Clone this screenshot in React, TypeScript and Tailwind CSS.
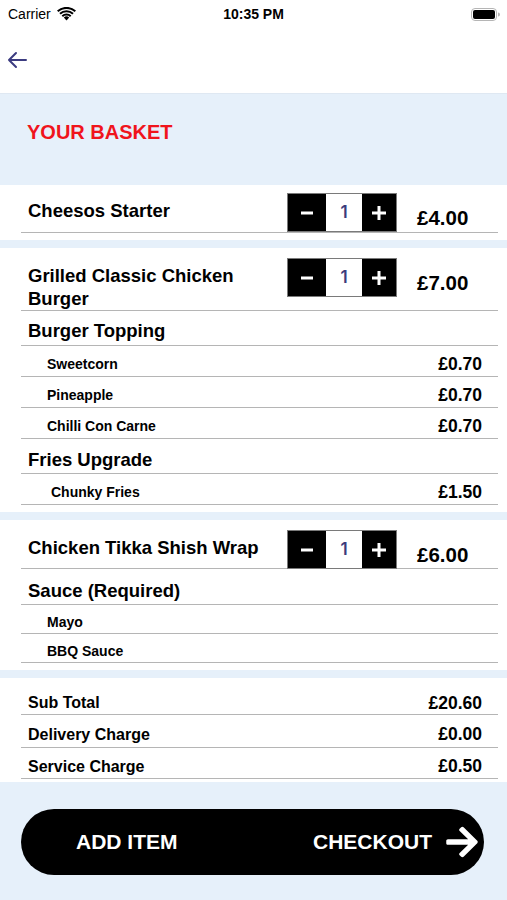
import { FaArrowRight } from "react-icons/fa";

const font = { fontFamily: '"Liberation Sans", Arial, sans-serif' };

type Sub = { name: string; price?: string; pt: string; h: string; indent?: string };
type Group = { title: string; pt: string; h: string; subs: Sub[] };
type Item = { name: string[]; price: string; rowH: string; groups: Group[] };

const items: Item[] = [
  { name: ["Cheesos Starter"], price: "£4.00", rowH: "h-[40px]", groups: [] },
  {
    name: ["Grilled Classic Chicken", "Burger"],
    price: "£7.00",
    rowH: "h-[53px]",
    groups: [
      {
        title: "Burger Topping",
        pt: "pt-[5px]",
        h: "h-[35px]",
        subs: [
          { name: "Sweetcorn", price: "£0.70", pt: "pt-[6px]", h: "h-[31px]" },
          { name: "Pineapple", price: "£0.70", pt: "pt-[7px]", h: "h-[31px]" },
          { name: "Chilli Con Carne", price: "£0.70", pt: "pt-[7px]", h: "h-[31px]" },
        ],
      },
      {
        title: "Fries Upgrade",
        pt: "pt-[7px]",
        h: "h-[35px]",
        subs: [{ name: "Chunky Fries", price: "£1.50", pt: "pt-[7px]", h: "h-[31px]", indent: "pl-[30px]" }],
      },
    ],
  },
  {
    name: ["Chicken Tikka Shish Wrap"],
    price: "£6.00",
    rowH: "h-[39px]",
    groups: [
      {
        title: "Sauce (Required)",
        pt: "pt-[8px]",
        h: "h-[36px]",
        subs: [
          { name: "Mayo", pt: "pt-[6px]", h: "h-[29px]" },
          { name: "BBQ Sauce", pt: "pt-[7px]", h: "h-[29px]" },
        ],
      },
    ],
  },
];

const totals = [
  { label: "Sub Total", value: "£20.60", h: "h-[37px]", pt: "pt-[14px]" },
  { label: "Delivery Charge", value: "£0.00", h: "h-[33px]", pt: "pt-[7px]" },
  { label: "Service Charge", value: "£0.50", h: "h-[31px]", pt: "pt-[7px]" },
];

function Stepper() {
  return (
    <div className="flex h-[39px] w-[110px] shrink-0 border border-[#7a7a7a]">
      <div className="flex w-[38px] items-center justify-center bg-black">
        <svg width="16" height="16" viewBox="0 0 16 16">
          <rect x="2" y="6.5" width="12" height="3" fill="#fff" />
        </svg>
      </div>
      <div className="flex w-[36px] items-center justify-center bg-white text-[17px] font-semibold text-[#3b3b7d]" style={{ fontFamily: "Inter, sans-serif" }}>
        1
      </div>
      <div className="flex flex-1 items-center justify-center bg-black">
        <svg width="18" height="18" viewBox="0 0 18 18">
          <rect x="2" y="7.5" width="14" height="3" fill="#fff" />
          <rect x="7.5" y="2" width="3" height="14" fill="#fff" />
        </svg>
      </div>
    </div>
  );
}

function StatusBar() {
  return (
    <div className="relative flex h-[28px] items-center px-[8px] text-[14px] text-black">
      <span>Carrier</span>
      <svg className="ml-[6px]" width="19" height="14" viewBox="0 0 19 14">
        <path d="M9.5 13.5 L12.2 10.6 A4 4 0 0 0 6.8 10.6 Z" fill="#000" />
        <path d="M4.6 8.4 A7 7 0 0 1 14.4 8.4 L13 9.9 A5 5 0 0 0 6 9.9 Z" fill="#000" />
        <path d="M2.3 6 A10.5 10.5 0 0 1 16.7 6 L15.3 7.5 A8.5 8.5 0 0 0 3.7 7.5 Z" fill="#000" />
        <path d="M0 3.6 A14 14 0 0 1 19 3.6 L17.6 5.1 A12 12 0 0 0 1.4 5.1 Z" fill="#000" />
      </svg>
      <span className="absolute left-1/2 -translate-x-1/2 font-bold">10:35 PM</span>
      <svg className="ml-auto mr-[-1px]" width="29" height="13" viewBox="0 0 29 13">
        <rect x="0.5" y="0.5" width="25" height="12" rx="3.5" fill="none" stroke="#b5b5b5" />
        <rect x="2" y="2" width="22" height="9" rx="2" fill="#000" />
        <path d="M27 4.5 A2 2 0 0 1 27 8.5 Z" fill="#b5b5b5" />
      </svg>
    </div>
  );
}

export default function App() {
  return (
    <div className="flex h-[900px] w-full flex-col overflow-hidden bg-[#e6f0fa]" style={font}>
      <div className="h-[93px] bg-white">
        <StatusBar />
        <div className="pl-[7px] pt-[23px]">
          <svg width="20" height="18" viewBox="0 0 20 18">
            <path d="M19 9 H2 M9 2 L2 9 L9 16" fill="none" stroke="#3b3b80" strokeWidth="2" strokeLinecap="round" strokeLinejoin="round" />
          </svg>
        </div>
      </div>

      <div className="h-[92px] border-t border-[#dfe8f2] pl-[27px] pt-[23px]">
        <h1 className="text-[20px] font-bold text-[#f0141c]">YOUR BASKET</h1>
      </div>

      {items.map((item, i) => (
        <div key={i} className={`bg-white pl-[21px] pr-[9px] ${i === 0 ? "pt-[8px] pb-[7px]" : "pt-[10px] pb-[7px]"} mb-[8px]`}>
          <div className={`flex items-start border-b border-[#b5b5b5] pl-[7px] pr-[16px] ${item.rowH}`}>
            <div className="flex-1 pt-[6px] text-[18.5px] font-bold leading-[23px] text-black">
              {item.name.map((n) => (
                <div key={n}>{n}</div>
              ))}
            </div>
            <Stepper />
            <div className="ml-[20px] w-[65px] pt-[14px] text-[20.5px] font-bold leading-[22px] text-black">{item.price}</div>
          </div>
          {item.groups.map((g) => (
            <div key={g.title}>
              <div className={`flex items-center border-b border-[#b5b5b5] pl-[7px] text-[18.5px] font-bold text-black ${g.h} ${g.pt}`}>
                {g.title}
              </div>
              {g.subs.map((s) => (
                <div
                  key={s.name}
                  className={`flex items-center justify-between border-b border-[#b5b5b5] pr-[16px] text-black ${s.indent ?? "pl-[26px]"} ${s.h} ${s.pt}`}
                >
                  <span className="text-[14px] font-bold">{s.name}</span>
                  {s.price && <span className="text-[17.5px] font-bold">{s.price}</span>}
                </div>
              ))}
            </div>
          ))}
        </div>
      ))}

      <div className="bg-white pb-[3px] pl-[21px] pr-[9px]">
        {totals.map((t) => (
          <div
            key={t.label}
            className={`flex items-center justify-between border-b border-[#b5b5b5] pl-[7px] pr-[16px] font-bold text-black ${t.h} ${t.pt}`}
          >
            <span className="text-[16px]">{t.label}</span>
            <span className="text-[17.5px]">{t.value}</span>
          </div>
        ))}
      </div>

      <div className="ml-[21px] mt-[27px] flex h-[66px] w-[463px] items-center rounded-full bg-black text-[21px] font-bold text-white">
        <span className="ml-[55px]">ADD ITEM</span>
        <span className="ml-auto">CHECKOUT</span>
        <FaArrowRight className="ml-[12px] mr-[4px]" size={36} />
      </div>
    </div>
  );
}
